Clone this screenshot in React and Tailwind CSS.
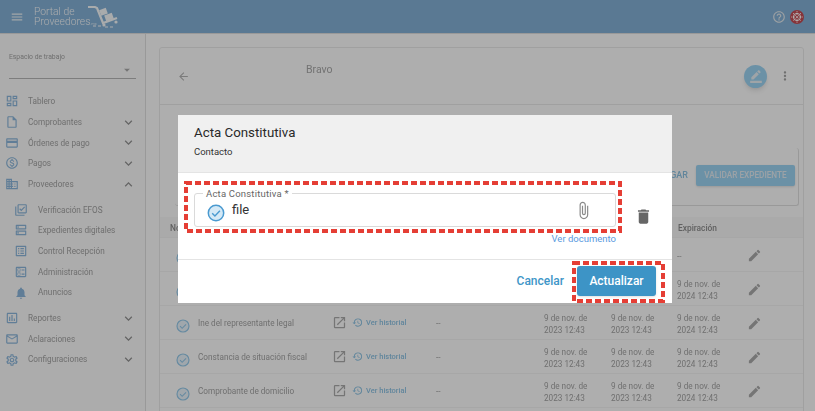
import {
  MdMenu,
  MdOutlineDashboard,
  MdOutlineInsertDriveFile,
  MdOutlineCreditCard,
  MdOutlineMonetizationOn,
  MdOutlineDomain,
  MdOutlineLibraryAddCheck,
  MdOutlineDns,
  MdOutlineListAlt,
  MdOutlineBallot,
  MdNotifications,
  MdOutlineAssessment,
  MdOutlineEmail,
  MdOutlineSettings,
  MdExpandMore,
  MdExpandLess,
  MdEdit,
  MdMoreVert,
  MdArrowBack,
  MdAttachFile,
  MdDelete,
  MdOutlineOpenInNew,
  MdHistory,
  MdHelpOutline,
  MdArrowDropDown,
  MdBorderColor,
} from "react-icons/md";

const menuTop = [
  { label: "Tablero", icon: MdOutlineDashboard },
  { label: "Comprobantes", icon: MdOutlineInsertDriveFile, arrow: "down" },
  { label: "Órdenes de pago", icon: MdOutlineCreditCard, arrow: "down" },
  { label: "Pagos", icon: MdOutlineMonetizationOn, arrow: "down" },
  { label: "Proveedores", icon: MdOutlineDomain, arrow: "up" },
];

const menuSub = [
  { label: "Verificación EFOS", icon: MdOutlineLibraryAddCheck },
  { label: "Expedientes digitales", icon: MdOutlineDns },
  { label: "Control Recepción", icon: MdOutlineListAlt },
  { label: "Administración", icon: MdOutlineBallot },
  { label: "Anuncios", icon: MdNotifications },
];

const menuBottom = [
  { label: "Reportes", icon: MdOutlineAssessment, arrow: "down" },
  { label: "Aclaraciones", icon: MdOutlineEmail, arrow: "down" },
  { label: "Configuraciones", icon: MdOutlineSettings, arrow: "down" },
];

// the first two rows sit behind the dialog, only their ends show
const rows = [
  { id: 1, covered: true, expiry: "--" },
  { id: 2, covered: true, expiry: "date" },
  { id: 3, name: "Ine del representante legal", expiry: "date" },
  { id: 4, name: "Constancia de situación fiscal", expiry: "date" },
  { id: 5, name: "Comprobante de domicilio", expiry: "date" },
];

function CheckIcon({ className, fill, stroke }) {
  return (
    <svg viewBox="0 0 18 18" className={className}>
      <circle cx="9" cy="9" r="7.7" fill={fill} stroke={stroke} strokeWidth="1.5" />
      <path d="M5.2 9.3l2.7 2.7 5-5.2" fill="none" stroke={stroke} strokeWidth="1.4" />
    </svg>
  );
}

function Logo() {
  return (
    <svg viewBox="0 0 32 24" className="w-8 h-6 ml-[-10px] mt-[-2px]">
      <path d="M1 3h7l2 1 6 15 14-5" fill="none" stroke="#f2f5f7" strokeWidth="2.2" />
      <rect x="13" y="5" width="7" height="6" fill="#f2f5f7" transform="rotate(-20 16 8)" />
      <rect x="18" y="10" width="8" height="6" fill="#f2f5f7" transform="rotate(-20 22 13)" />
      <circle cx="17" cy="21" r="1.6" fill="#f2f5f7" />
      <circle cx="29" cy="18" r="1.6" fill="#f2f5f7" />
      <path d="M6 22h9M18 23h8" stroke="#f2f5f7" strokeWidth="1" strokeDasharray="3 2" />
    </svg>
  );
}

function Avatar() {
  return (
    <svg viewBox="0 0 14 14" className="w-[14px] h-[14px]">
      <circle cx="7" cy="7" r="7" fill="#c04a52" />
      <circle cx="7" cy="7" r="3.6" fill="none" stroke="#fff" strokeWidth="1" />
      <path d="M7 1v12M1 7h12M3 3l8 8M11 3l-8 8" stroke="#fff" strokeWidth="0.8" strokeDasharray="1.4 1.2" />
    </svg>
  );
}

function MenuRow({ item, sub }) {
  const Icon = item.icon;
  return (
    <div className="flex items-center h-[20.7px]">
      <Icon className={`text-[#8ab4d8] text-[14px] shrink-0 ${sub ? "ml-[14px] mr-[10px]" : "ml-[5px] mr-[9px]"}`} />
      <span className="flex-1 text-[8.2px] text-[#a0a0a0] whitespace-nowrap">{item.label}</span>
      {item.arrow === "down" && <MdExpandMore className="text-[15px] text-[#909090] mr-[9px]" />}
      {item.arrow === "up" && <MdExpandLess className="text-[15px] text-[#909090] mr-[9px]" />}
    </div>
  );
}

function Sidebar() {
  return (
    <aside className="w-[146px] shrink-0 border-r border-[#dcdcdc] bg-[#f6f6f6]">
      <div className="mx-[9px] mt-[18px] h-[27px] border-b border-[#b4b4b4] relative">
        <div className="text-[6.8px] leading-[10px] text-[#a0a0a0]">Espacio de trabajo</div>
        <MdArrowDropDown className="absolute right-[2px] top-[11px] text-[14px] text-[#a8a8a8]" />
      </div>
      <div className="mt-[12px]">
        {menuTop.map((item) => (
          <MenuRow key={item.label} item={item} />
        ))}
      </div>
      <div className="mt-[5px]">
        {menuSub.map((item) => (
          <MenuRow key={item.label} item={item} sub />
        ))}
      </div>
      <div className="mt-[5px]">
        {menuBottom.map((item) => (
          <MenuRow key={item.label} item={item} />
        ))}
      </div>
    </aside>
  );
}

function DateCell({ year }) {
  return (
    <span className="mt-[2px]">
      9 de nov. de
      <br />
      {year} 12:43
    </span>
  );
}

function DocRow({ row }) {
  return (
    <div className="grid grid-cols-[22px_134px_23px_81px_108px_67px_66px_70px_1fr] items-center h-[34px] pl-[16px] border-b border-[#efefef] text-[8.2px] leading-[12px] text-[#a0a0a0]">
      <CheckIcon className="w-[14px] h-[14px] mt-[6px]" fill="#e6f0f7" stroke="#93c6e6" />
      {row.covered ? <span /> : <span className="whitespace-nowrap">{row.name}</span>}
      {row.covered ? <span /> : <MdOutlineOpenInNew className="text-[15px] text-[#a8a8a8]" />}
      {row.covered ? (
        <span />
      ) : (
        <span className="flex items-center gap-[3px] ml-[-3px] text-[7.5px] text-[#8abfdf] font-medium">
          <MdHistory className="text-[11px]" />
          Ver historial
        </span>
      )}
      {row.covered ? <span /> : <span>--</span>}
      {row.covered ? <span /> : <DateCell year="2023" />}
      {row.covered ? <span /> : <DateCell year="2023" />}
      {row.expiry === "--" ? <span className="mt-[2px]">--</span> : <DateCell year="2024" />}
      <MdEdit className="text-[15px] text-[#a8a8a8] mt-[1px]" />
    </div>
  );
}

function MainCard() {
  return (
    <main className="flex-1 min-w-0 pl-[13px] pr-[11px] pt-[13px]">
      <div className="border border-[#e6e6e6] rounded-[3px] h-[400px] bg-[#fafafa]">
        <div className="flex items-center h-[57px] border-b border-[#e6e6e6] pl-[17px] pr-[11px]">
          <MdArrowBack className="text-[13px] text-[#b0b0b0]" />
          <span className="ml-[116px] mb-[12px] text-[10.5px] text-[#a4a4a4]">Bravo</span>
          <div className="ml-auto flex items-center gap-[11px]">
            <div className="w-[23px] h-[23px] rounded-full bg-[#9ad0ee] shadow-md flex items-center justify-center">
              <MdBorderColor className="text-[14px] text-[#e4ebf0]" />
            </div>
            <MdMoreVert className="text-[14px] text-[#a0a0a0]" />
          </div>
        </div>
        <div className="mx-[15px] mt-[43px] h-[58px] w-[624px] rounded-[3px] border-b border-r border-[#dcdcdc] flex items-start justify-end gap-[8px] pt-[17px] pr-[3px]">
          <span className="text-[9px] leading-[21px] font-medium text-[#8abfdf]">DESCARGAR</span>
          <div className="w-[99px] h-[21px] rounded-[2px] bg-[#9ad0ee] shadow-sm text-[8.2px] leading-[21px] font-medium text-center text-[#e0e8ee]">
            VALIDAR EXPEDIENTE
          </div>
        </div>
        <div className="mt-[11px] h-[21px] bg-[#f4f4f4] border-b border-[#efefef] grid grid-cols-[508px_1fr] items-center pt-[2px] pl-[10px] text-[8.4px] font-medium text-[#8a8a8a]">
          <span>Nombre</span>
          <span>Expiración</span>
        </div>
        {rows.map((row) => (
          <DocRow key={row.id} row={row} />
        ))}
      </div>
    </main>
  );
}

function Dialog() {
  return (
    <div className="absolute left-[178px] top-[115px] w-[494px] h-[188px] bg-white flex flex-col font-['Roboto',sans-serif]">
      <div className="h-[58px] bg-[#f0f0f0] border-b border-[#e4e4e4] px-[16px] pt-[9px] shrink-0">
        <div className="text-[13.3px] leading-[17px] text-[#2a2a2a]">Acta Constitutiva</div>
        <div className="mt-[5px] text-[9.5px] leading-[12px] text-[#333]">Contacto</div>
      </div>
      <div className="h-[87px] border-b border-[#e4e4e4] shrink-0 px-[16px] pt-[20px]">
        <div className="flex items-start">
          <div className="relative w-[422px] h-[34px] border border-[#dadada] rounded-[3px] flex items-center pl-[12px] pr-[22px]">
            <span className="absolute left-[8px] top-[-6px] bg-white px-[3px] text-[9.5px] leading-[11px] tracking-[0.2px] text-[#666]">
              Acta Constitutiva *
            </span>
            <CheckIcon className="w-[18px] h-[18px] mt-[5px]" fill="#d5e9f6" stroke="#4a9ad0" />
            <span className="ml-[7px] text-[13px] leading-[16px] text-[#333]">file</span>
            <MdAttachFile className="ml-auto text-[19px] text-[#8a8a8a]" />
          </div>
          <MdDelete className="ml-[18px] mt-[14px] text-[19px] text-[#666]" />
        </div>
        <div className="w-[422px] mt-[6px] text-right text-[9.5px] leading-[12px] text-[#5a9ae0]">Ver documento</div>
      </div>
      <div className="flex-1 flex items-start justify-end pt-[6px] pr-[16px] gap-[13px]">
        <span className="text-[12px] leading-[30px] font-medium text-[#4096c8]">Cancelar</span>
        <div className="w-[79px] h-[30px] rounded-[3px] bg-[#3d94c6] shadow text-white text-[12px] leading-[30px] font-medium text-center">
          Actualizar
        </div>
      </div>
      {/* red dashed marks painted over the screenshot */}
      <svg className="absolute inset-0 w-full h-full pointer-events-none overflow-visible" viewBox="0 0 494 188">
        <rect x="8" y="68" width="434" height="48" fill="none" stroke="#e53e35" strokeWidth="4" strokeDasharray="6 3" />
        <rect x="396" y="148" width="89" height="38" fill="none" stroke="#e53e35" strokeWidth="4" strokeDasharray="6 3" />
      </svg>
    </div>
  );
}

export default function App() {
  return (
    <div className="relative w-[815px] h-[411px] overflow-hidden bg-white font-['Roboto',sans-serif]">
      <div className="flex flex-col h-full blur-[0.4px]">
        <header className="h-[34px] shrink-0 bg-[#82aed3] border-b border-[#dcdcdc] flex items-center pl-[10px] pr-[11px]">
          <MdMenu className="text-[14px] text-[#e8eef2]" />
          <div className="ml-[10px] mt-[3px] text-[10.3px] leading-[10px] font-light text-[#f2f5f7]">
            <div>Portal de</div>
            <div>Proveedores<span className="text-[4px]">.mx</span></div>
          </div>
          <Logo />
          <div className="ml-auto flex items-center gap-[4px]">
            <MdHelpOutline className="text-[14px] text-[#e0e6ea]" />
            <Avatar />
          </div>
        </header>
        <div className="flex flex-1 min-h-0 bg-[#fafafa]">
          <Sidebar />
          <MainCard />
        </div>
      </div>
      <div className="absolute inset-0 bg-black/30" />
      <Dialog />
    </div>
  );
}
